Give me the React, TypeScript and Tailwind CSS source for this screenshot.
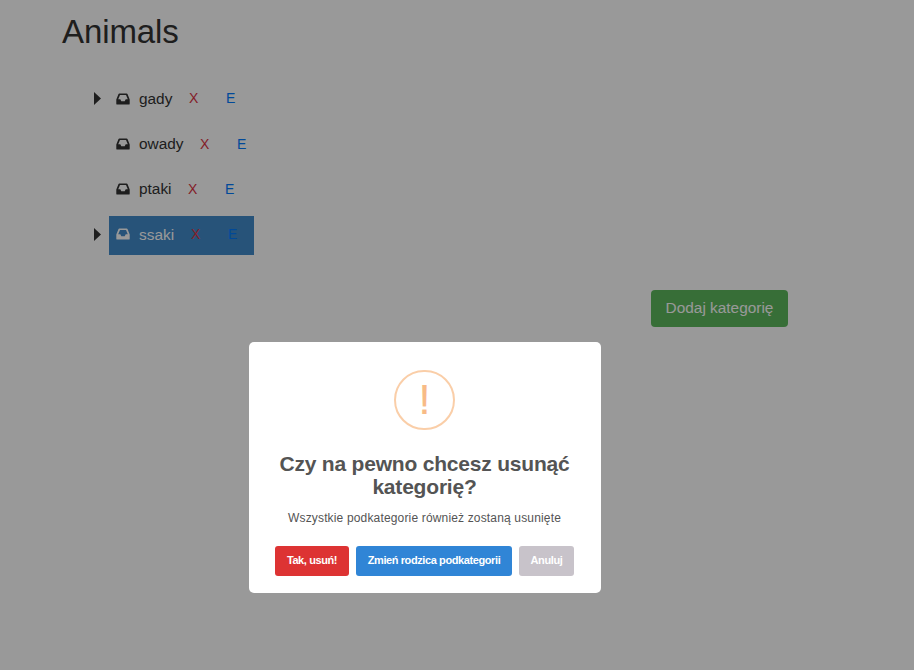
type Category = {
  name: string;
  expandable: boolean;
  selected: boolean;
  width: string;
  gap: string;
  linkOffset: string;
};

const categories: Category[] = [
  { name: "gady", expandable: true, selected: false, width: "w-[50px]", gap: "mb-[6px]", linkOffset: "pb-0.5" },
  { name: "owady", expandable: false, selected: false, width: "w-[61px]", gap: "mb-[6px]", linkOffset: "" },
  { name: "ptaki", expandable: false, selected: false, width: "w-[49px]", gap: "mb-[7px]", linkOffset: "" },
  { name: "ssaki", expandable: true, selected: true, width: "w-[52px]", gap: "", linkOffset: "pb-0.5" },
];

function InboxIcon({ raised }: { raised: boolean }) {
  return (
    <svg viewBox="0 0 14 12" className={`h-3 w-3.5 shrink-0 ${raised ? "mb-[3px]" : "mb-px"}`} fill="currentColor">
      <path
        fillRule="evenodd"
        d="M3.400 0.500h7.200a1 1 0 0 1 .9.6L13.700 6.500v4.200a.9.9 0 0 1-.9.9H1.200a.9.9 0 0 1-.9-.9V6.500L2.500 1.100a1 1 0 0 1 .9-.6zM4 2L2.200 6.300h2.100l1 1.900h3.400l1-1.900h2.100L10 2z"
      />
    </svg>
  );
}

function CategoryRow({ name, expandable, selected, width, gap, linkOffset }: Category) {
  return (
    <li className={`flex h-[39px] items-center ${gap}`}>
      <span className="w-[15px] shrink-0 pb-[3px]">
        {expandable && (
          <svg viewBox="0 0 7 13" className="block h-[13px] w-[7px]" fill="#333">
            <path d="M0 0v13l7-6.500z" />
          </svg>
        )}
      </span>
      <div
        className={`flex h-full items-center pr-[17px] pl-[7px] ${selected ? "bg-[#428bca] text-white" : "text-[#333]"}`}
      >
        <InboxIcon raised={selected} />
        <span className={`ml-[9px] shrink-0 pb-0.5 text-[15.4px] ${width}`}>{name}</span>
        <a className={`w-[37px] text-[14px] text-[#dc3545] ${linkOffset}`}>X</a>
        <a className={`w-[9px] text-[14px] text-[#007bff] ${linkOffset}`}>E</a>
      </div>
    </li>
  );
}

export default function App() {
  return (
    <div className="relative h-[670px] w-[914px] overflow-hidden bg-white font-['Liberation_Sans',Arial,sans-serif]">
      <main className="flex flex-col pl-[62px]">
        <h1 className="mt-[11px] h-[41px] text-[33px] leading-[41px] tracking-[-0.1px] text-[#333]">Animals</h1>
        <ul className="mt-7 flex flex-col pl-8">
          {categories.map((category) => (
            <CategoryRow key={category.name} {...category} />
          ))}
        </ul>
        <button className="mt-[35px] ml-[589px] h-[37px] w-[137px] rounded-[4px] bg-[#5cb85c] pb-px text-[15.4px] whitespace-nowrap text-white">
          Dodaj kategorię
        </button>
      </main>

      <div className="absolute inset-0 bg-black/40">
        <section className="mt-[342px] ml-[249px] flex h-[251px] w-[352px] flex-col items-center rounded-[5px] bg-white pt-7 pr-px text-center">
          <div className="flex h-[60px] w-[61px] items-center justify-center rounded-full border-2 border-[#facea8] pb-0.5 text-[43px] leading-none text-[#f8bb86] [-webkit-text-stroke:0.2px_#f8bb86]">
            !
          </div>
          <h2 className="mt-[22px] text-[21px] leading-[23px] font-bold tracking-[-0.2px] whitespace-nowrap text-[#545454]">
            Czy na pewno chcesz usunąć
            <br />
            kategorię?
          </h2>
          <p className="mt-3 text-[12px] leading-4 tracking-[0.16px] whitespace-nowrap text-[#545454]">
            Wszystkie podkategorie również zostaną usunięte
          </p>
          <div className="mt-5 mr-px flex h-[30px] gap-[7px] text-[11px] font-bold whitespace-nowrap text-white">
            <button className="w-[74px] rounded-[3px] bg-[#dd3333] pb-0.5 pl-px tracking-[-0.4px]">Tak, usuń!</button>
            <button className="w-[156px] rounded-[3px] bg-[#3085d6] pb-0.5 pl-px tracking-[-0.4px]">Zmień rodzica podkategorii</button>
            <button className="w-[55px] rounded-[3px] bg-[#c8c3ca] pb-0.5 pl-px tracking-[-0.4px]">Anuluj</button>
          </div>
        </section>
      </div>
    </div>
  );
}
